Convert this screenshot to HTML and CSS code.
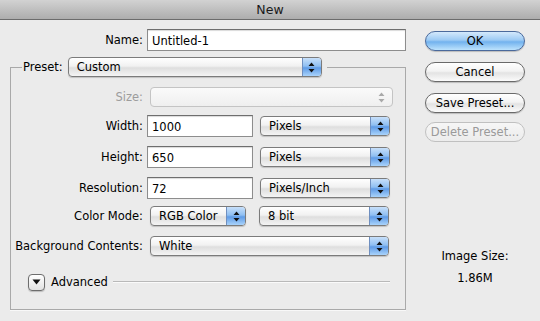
FILE: index.html
```html
<!DOCTYPE html>
<html>
<head>
    <title>New</title>
    <link rel="stylesheet" href="styles.css">
</head>
<body>
    <div class="window">
        <div class="titlebar">New</div>
        <div class="dialog">
            <div class="main">
                <div class="row name-row">
                    <label class="label">Name:</label>
                    <input type="text" class="field name-field" value="Untitled-1">
                </div>

                <fieldset class="preset-box">
                    <legend class="preset-legend">
                        <span class="legend-label">Preset:</span>
                        <div class="popup preset-popup">
                            <span class="popup-text">Custom</span>
                            <span class="popup-arrows">
                                <svg width="7" height="11" viewBox="0 0 7 11"><path d="M3.5 0.5 L6.5 4 H0.5 Z M3.5 10.5 L6.5 7 H0.5 Z" fill="#111"/></svg>
                            </span>
                        </div>
                    </legend>

                    <div class="rows">
                        <div class="row">
                            <label class="label disabled">Size:</label>
                            <div class="popup popup-disabled size-popup">
                                <span class="popup-text"></span>
                                <span class="popup-arrows">
                                    <svg width="7" height="11" viewBox="0 0 7 11"><path d="M3.5 0.5 L6.5 4 H0.5 Z M3.5 10.5 L6.5 7 H0.5 Z" fill="#aaa"/></svg>
                                </span>
                            </div>
                        </div>
                        <div class="row gap-a">
                            <label class="label">Width:</label>
                            <input type="text" class="field num-field" value="1000">
                            <div class="popup unit-popup">
                                <span class="popup-text">Pixels</span>
                                <span class="popup-arrows">
                                    <svg width="7" height="11" viewBox="0 0 7 11"><path d="M3.5 0.5 L6.5 4 H0.5 Z M3.5 10.5 L6.5 7 H0.5 Z" fill="#111"/></svg>
                                </span>
                            </div>
                        </div>
                        <div class="row gap-b">
                            <label class="label">Height:</label>
                            <input type="text" class="field num-field" value="650">
                            <div class="popup unit-popup">
                                <span class="popup-text">Pixels</span>
                                <span class="popup-arrows">
                                    <svg width="7" height="11" viewBox="0 0 7 11"><path d="M3.5 0.5 L6.5 4 H0.5 Z M3.5 10.5 L6.5 7 H0.5 Z" fill="#111"/></svg>
                                </span>
                            </div>
                        </div>
                        <div class="row gap-b">
                            <label class="label">Resolution:</label>
                            <input type="text" class="field num-field" value="72">
                            <div class="popup unit-popup">
                                <span class="popup-text">Pixels/Inch</span>
                                <span class="popup-arrows">
                                    <svg width="7" height="11" viewBox="0 0 7 11"><path d="M3.5 0.5 L6.5 4 H0.5 Z M3.5 10.5 L6.5 7 H0.5 Z" fill="#111"/></svg>
                                </span>
                            </div>
                        </div>
                        <div class="row gap-c">
                            <label class="label">Color Mode:</label>
                            <div class="popup mode-popup">
                                <span class="popup-text">RGB Color</span>
                                <span class="popup-arrows">
                                    <svg width="7" height="11" viewBox="0 0 7 11"><path d="M3.5 0.5 L6.5 4 H0.5 Z M3.5 10.5 L6.5 7 H0.5 Z" fill="#111"/></svg>
                                </span>
                            </div>
                            <div class="popup unit-popup">
                                <span class="popup-text">8 bit</span>
                                <span class="popup-arrows">
                                    <svg width="7" height="11" viewBox="0 0 7 11"><path d="M3.5 0.5 L6.5 4 H0.5 Z M3.5 10.5 L6.5 7 H0.5 Z" fill="#111"/></svg>
                                </span>
                            </div>
                        </div>
                        <div class="row gap-d">
                            <label class="label">Background Contents:</label>
                            <div class="popup bg-popup">
                                <span class="popup-text">White</span>
                                <span class="popup-arrows">
                                    <svg width="7" height="11" viewBox="0 0 7 11"><path d="M3.5 0.5 L6.5 4 H0.5 Z M3.5 10.5 L6.5 7 H0.5 Z" fill="#111"/></svg>
                                </span>
                            </div>
                        </div>
                        <div class="row advanced-row">
                            <span class="disclosure">
                                <svg width="9" height="6" viewBox="0 0 9 6"><path d="M0.5 0.5 H8.5 L4.5 5.5 Z" fill="#111"/></svg>
                            </span>
                            <span class="advanced-text">Advanced</span>
                            <span class="separator"></span>
                        </div>
                    </div>
                </fieldset>
            </div>

            <div class="side">
                <button class="btn btn-default">OK</button>
                <button class="btn">Cancel</button>
                <button class="btn">Save Preset...</button>
                <button class="btn btn-disabled">Delete Preset...</button>
                <div class="image-size">
                    <div class="image-size-label">Image Size:</div>
                    <div class="image-size-value">1.86M</div>
                </div>
            </div>
        </div>
    </div>
</body>
</html>
```

FILE: styles.css
```css
body {
    margin: 0;
    background: #ebebeb;
    font-family: "DejaVu Sans", sans-serif;
    font-size: 11.5px;
    color: #000;
}
.window {
    width: 540px;
    height: 321px;
    overflow: hidden;
}
.titlebar {
    height: 19px;
    line-height: 20px;
    text-align: center;
    font-size: 12.5px;
    color: #1a1a1a;
    background: linear-gradient(#d2d2d2, #adadad);
    border-bottom: 1px solid #6c6c6c;
}
.dialog {
    display: flex;
}
.main {
    width: 396px;
    margin-left: 10px;
    padding-top: 9px;
}
.row {
    display: flex;
    align-items: center;
    height: 22px;
}
.label {
    width: 132px;
    text-align: right;
    margin-right: 4px;
    flex-shrink: 0;
}
.name-row .label {
    width: 133px;
}
.label.disabled {
    color: #9c9c9c;
}
.field {
    box-sizing: border-box;
    height: 22px;
    margin: 0;
    padding: 1px 4px 0;
    border: 1px solid #8d8d8d;
    border-top-color: #6e6e6e;
    background: #fff;
    font-family: "DejaVu Sans", sans-serif;
    font-size: 11.5px;
    color: #000;
    box-shadow: inset 0 1px 1px rgba(0, 0, 0, 0.15);
}
.name-field {
    width: 259px;
}
.num-field {
    width: 106px;
}

/* preset group */
.preset-box {
    margin: 6px 0 0;
    padding: 0;
    border: 1px solid #a9a9a9;
    box-shadow: 0 1px 0 #f8f8f8;
    height: 253px;
    box-sizing: border-box;
}
.preset-legend {
    display: flex;
    align-items: center;
    margin-left: 11px;
    padding: 0 5px 0 1px;
    height: 20px;
}
.legend-label {
    margin-right: 5px;
}
.rows {
    padding-top: 9px;
}
.gap-a { margin-top: 7px; }
.gap-b { margin-top: 9px; }
.gap-c { margin-top: 6px; }
.gap-d { margin-top: 8px; }

/* popup menus */
.popup {
    box-sizing: border-box;
    display: flex;
    height: 20px;
    border: 1px solid #7b7b7b;
    border-radius: 4px;
    background: linear-gradient(#ffffff 0%, #f1f1f1 45%, #dedede 55%, #f4f4f4 100%);
    box-shadow: 0 1px 1px rgba(0, 0, 0, 0.18);
    overflow: hidden;
    flex-shrink: 0;
}
.popup-text {
    flex: 1;
    padding-left: 8px;
    line-height: 18px;
    white-space: nowrap;
}
.popup-arrows {
    width: 18px;
    display: flex;
    align-items: center;
    justify-content: center;
    border-left: 1px solid #6f8fbf;
    background: linear-gradient(#c8e0fa 0%, #8fbff2 45%, #5f9be6 55%, #a9d3fb 100%);
}
.popup-disabled {
    border-color: #c4c4c4;
    box-shadow: none;
    background: linear-gradient(#fafafa, #efefef);
}
.popup-disabled .popup-arrows {
    width: 21px;
    border-left: none;
    background: none;
}
.preset-popup {
    width: 254px;
}
.size-popup {
    margin-left: 3px;
    width: 243px;
}
.unit-popup {
    margin-left: 7px;
    width: 130px;
}
.mode-popup {
    margin-left: 3px;
    width: 96px;
}
.mode-popup + .unit-popup {
    margin-left: 13px;
}
.bg-popup {
    margin-left: 3px;
    width: 239px;
}

/* advanced */
.advanced-row {
    margin-top: 14px;
}
.disclosure {
    box-sizing: border-box;
    width: 17px;
    height: 17px;
    margin-left: 17px;
    display: flex;
    align-items: center;
    justify-content: center;
    border: 1px solid #6d6d6d;
    border-radius: 4px;
    background: linear-gradient(#ffffff, #e2e2e2);
    box-shadow: 0 1px 1px rgba(0, 0, 0, 0.2);
}
.advanced-text {
    margin-left: 6px;
}
.separator {
    width: 277px;
    margin-left: 5px;
    border-top: 1px solid #b9b9b9;
    border-bottom: 1px solid #fafafa;
}

/* right column */
.side {
    width: 100px;
    margin-left: 19px;
    padding-top: 11px;
    display: flex;
    flex-direction: column;
}
.btn {
    box-sizing: border-box;
    height: 20px;
    margin: 0 0 11px;
    padding: 0;
    border: 1px solid #6a6a6a;
    border-radius: 10px;
    background: linear-gradient(#ffffff 0%, #f3f3f3 45%, #e3e3e3 55%, #fbfbfb 100%);
    box-shadow: 0 1px 1px rgba(0, 0, 0, 0.2);
    font-family: "DejaVu Sans", sans-serif;
    font-size: 11.5px;
    color: #000;
}
.btn-default {
    border-color: #4b6a9c;
    background: linear-gradient(#d4e9fc 0%, #9ccaf4 45%, #72b2ee 55%, #bde3fd 100%);
}
.btn-disabled {
    margin-top: -2px;
    border-color: #c0c0c0;
    color: #9a9a9a;
    box-shadow: none;
    background: linear-gradient(#f6f6f6, #ececec);
}
.image-size {
    margin-top: 96px;
    text-align: center;
}
.image-size-value {
    margin-top: 8px;
}
```
